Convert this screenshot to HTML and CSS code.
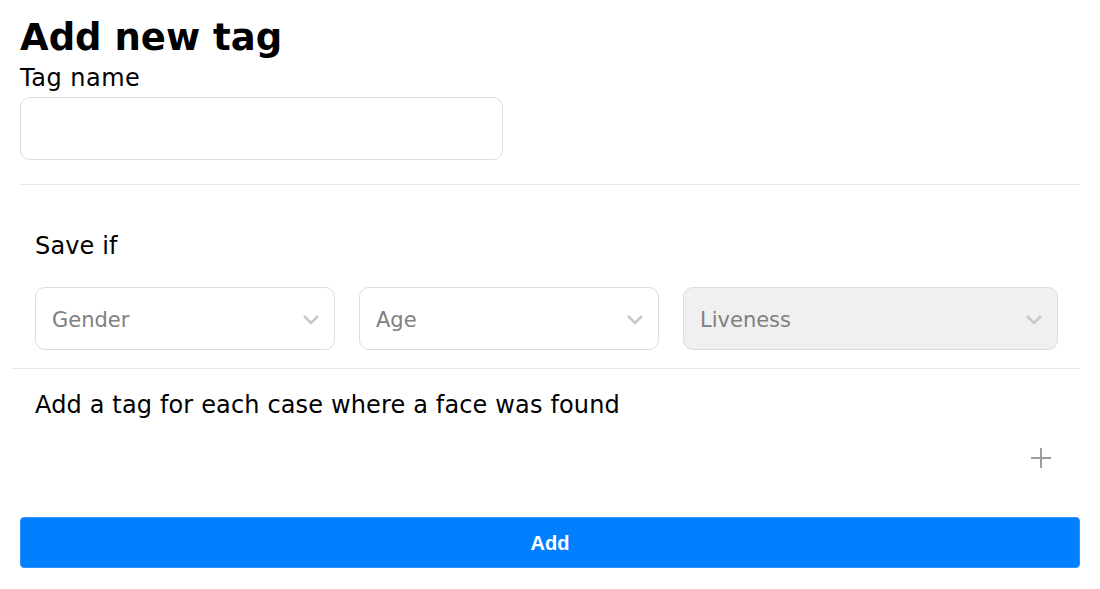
FILE: index.html
```html
<!DOCTYPE html>
<html>
<head>
<meta charset="utf-8">
<link rel="stylesheet" href="styles.css">
</head>
<body>
<div class="page">
  <h1 class="title">Add new tag</h1>
  <label class="label">Tag name</label>
  <input class="text-input" type="text">
  <hr class="divider">
  <div class="save-section">
    <div class="section-title">Save if</div>
    <div class="selects">
      <div class="select select-sm"><span>Gender</span><svg class="chev" width="18" height="12" viewBox="0 0 18 12"><path d="M2 2 L9 9 L16 2" fill="none" stroke="#c8c8c8" stroke-width="2.6"/></svg></div>
      <div class="select select-sm"><span>Age</span><svg class="chev" width="18" height="12" viewBox="0 0 18 12"><path d="M2 2 L9 9 L16 2" fill="none" stroke="#c8c8c8" stroke-width="2.6"/></svg></div>
      <div class="select select-lg disabled"><span>Liveness</span><svg class="chev" width="18" height="12" viewBox="0 0 18 12"><path d="M2 2 L9 9 L16 2" fill="none" stroke="#c8c8c8" stroke-width="2.6"/></svg></div>
    </div>
  </div>
  <hr class="divider divider-wide">
  <div class="case-section">
    <div class="section-title">Add a tag for each case where a face was found</div>
    <div class="plus-row"><svg width="22" height="22" viewBox="0 0 22 22"><path d="M11 1 V21 M1 11 H21" stroke="#9a9da3" stroke-width="2"/></svg></div>
  </div>
  <button class="add-btn">Add</button>
</div>
</body>
</html>
```
FILE: styles.css
```css
html, body {
  margin: 0;
  padding: 0;
  background: #fff;
}
body {
  font-family: "DejaVu Sans", sans-serif;
  color: #000;
}
.page {
  padding: 15px 20px 0 20px;
  display: flex;
  flex-direction: column;
}
.title {
  margin: 0;
  font-size: 37px;
  font-weight: 600;
  line-height: 46px;
}
.label {
  font-size: 24px;
  line-height: 28px;
  letter-spacing: 0.5px;
  margin-top: 3px;
}
.text-input {
  box-sizing: border-box;
  width: 483px;
  height: 63px;
  margin-top: 5px;
  border: 1px solid #dcdcdc;
  border-radius: 10px;
  outline: none;
}
.divider {
  margin: 24px 0 0 0;
  border: 0;
  border-top: 1px solid #e6e6e6;
  height: 0;
}
.divider-wide {
  margin: 18px 0 0 -8px;
}
.save-section {
  padding: 47px 15px 0 15px;
}
.section-title {
  font-size: 24px;
  line-height: 28px;
  letter-spacing: 0.15px;
}
.selects {
  display: flex;
  gap: 24px;
  margin-top: 27px;
}
.select {
  box-sizing: border-box;
  height: 63px;
  border: 1px solid #dcdcdc;
  border-radius: 10px;
  display: flex;
  align-items: center;
  justify-content: space-between;
  padding: 3px 14px 0 16px;
  font-size: 21px;
  color: #808080;
  background: #fff;
}
.select-sm { width: 300px; }
.select-lg { width: 375px; }
.select.disabled { background: #f0f0f0; }
.chev { display: block; }
.case-section {
  padding: 22px 15px 0 15px;
}
.plus-row {
  display: flex;
  justify-content: flex-end;
  padding: 28px 13px 0 0;
}
.plus-row svg { display: block; }
.add-btn {
  margin-top: 48px;
  height: 51px;
  width: 100%;
  border: 1px solid #3390ff;
  border-radius: 4px;
  background: #007fff;
  color: #fff;
  font-family: "Liberation Sans", Arial, sans-serif;
  font-weight: 700;
  font-size: 20px;
  padding-top: 3px;
}
```
